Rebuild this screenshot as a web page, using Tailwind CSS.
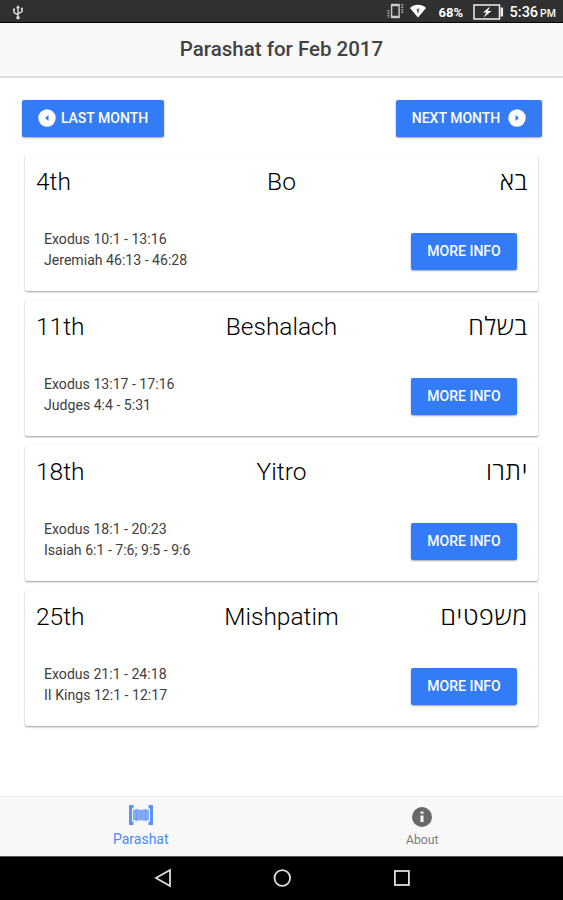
<!DOCTYPE html>
<html lang="en">
<head>
    <meta charset="UTF-8">
    <meta name="viewport" content="width=device-width, initial-scale=1.0">
    <title>Parashat for Feb 2017</title>
    <script src="https://cdn.jsdelivr.net/npm/@tailwindcss/browser@4"></script>
</head>
<body class="bg-white">
    <div class="flex h-[900px] w-[563px] flex-col overflow-hidden bg-white font-['Roboto','Open_Sans',sans-serif] text-black">
        <!-- Status bar -->
        <div class="flex h-[23px] shrink-0 items-center border-b border-black bg-[#303030] pl-3 pr-[7px] text-white">
            <svg class="mt-0.5 h-[15px] w-3" viewBox="0 0 12 16" fill="none" stroke="#ddd" stroke-width="1.500">
                <path d="M6 2v11M6 10.500L1.800 8V5M6 9.500L10.200 7V4"/>
                <path d="M6 0L3.800 3.500h4.400zM.8 3.800h2v2h-2zM9.200 3h2v2h-2z" fill="#ddd" stroke="none"/>
                <circle cx="6" cy="13.500" r="1.900" fill="#ddd" stroke="none"/>
            </svg>
            <svg class="ml-auto h-4 w-[17px]" viewBox="0 0 17 16" fill="none" stroke="#ccc">
                <rect x="4.600" y="1.500" width="7.500" height="13" stroke-width="1.400"/>
                <path d="M5 2.500h7M5 13.500h7" stroke-width="1.500"/>
                <path d="M1.500 7v8M15.200 1v9" stroke-dasharray="1.500 1" stroke-width="2.200" stroke="#999"/>
            </svg>
            <svg class="ml-[6px] h-[14px] w-4" viewBox="0 0 16 13">
                <path d="M0 3.500C4.500-.8 11.500-.8 16 3.500L8 13z" fill="#fff"/>
                <path d="M8 4v4.500M6.700 5.500h2.600" stroke="#555" stroke-width="1.300"/>
            </svg>
            <span class="ml-[13px] mt-[3px] w-[26px] whitespace-nowrap text-[13px] font-bold leading-none">68%</span>
            <svg class="ml-[8px] mt-px h-4 w-[31px]" viewBox="0 0 31 16" fill="none" stroke="#eee">
                <rect x="1" y="1" width="25.500" height="14" stroke-width="1.500"/>
                <path d="M28.800 3.500v9" stroke-width="2.500"/>
                <path d="M17 2.500L10 8.500h3.500L10.500 13.500L18.500 7H15z" fill="#fff" stroke="none"/>
            </svg>
            <span class="ml-[6px] mt-[5px] whitespace-nowrap text-[14.500px] font-medium leading-none">5:36<span class="ml-0.5 text-[10.500px]">PM</span></span>
        </div>

        <!-- Header -->
        <header class="flex h-[55px] shrink-0 items-center justify-center border-b-2 border-[#dedede] bg-[#f8f8f8] pb-0.5">
            <h1 class="text-[20.500px] font-medium leading-6 text-[#424242]">Parashat for Feb 2017</h1>
        </header>

        <!-- Content -->
        <main class="flex-1">
            <div class="flex justify-between px-[22px] pt-[22px]">
                <button class="flex h-[37px] w-[142px] items-center justify-center gap-[5px] rounded-[2px] bg-[#347cf7] text-[14px] font-medium text-white shadow-[0_1px_2px_rgba(0,0,0,0.35)]">
                    <svg class="-mt-px h-[18px] w-[18px]" viewBox="0 0 18 18"><circle cx="9" cy="9" r="8.700" fill="#fff"/><path d="M10.500 6v6L7 9z" fill="#347cf7"/></svg>
                    <span>LAST MONTH</span>
                </button>
                <button class="-mr-px flex h-[37px] w-[146px] items-center justify-center gap-2 rounded-[2px] bg-[#347cf7] text-[14px] font-medium text-white shadow-[0_1px_2px_rgba(0,0,0,0.35)]">
                    <span>NEXT MONTH</span>
                    <svg class="-mt-px h-[18px] w-[18px]" viewBox="0 0 18 18"><circle cx="9" cy="9" r="8.700" fill="#fff"/><path d="M7.500 6v6L11 9z" fill="#347cf7"/></svg>
                </button>
            </div>

            <div class="mt-[18px] flex flex-col gap-[9.500px] px-[25px]">
                <section class="h-[135.500px] rounded-[2px] px-[11px] pt-[11px] shadow-[0_1px_2px_rgba(0,0,0,0.4)]">
                    <div class="grid grid-cols-3 text-[24.500px] font-light leading-8">
                        <h2>4th</h2>
                        <h2 class="text-center">Bo</h2>
                        <h2 class="-mr-px text-right text-[25px] tracking-[0.7px]" lang="he">בא</h2>
                    </div>
                    <div class="mt-[31px] flex justify-between pl-2 pr-[10px]">
                        <p class="text-[14.100px] leading-[21px] text-[#404040]">Exodus 10:1 - 13:16<br>Jeremiah 46:13 - 46:28</p>
                        <button class="mt-[4px] h-[37px] w-[106px] rounded-[2px] bg-[#347cf7] text-[14px] font-medium text-white shadow-[0_1px_2px_rgba(0,0,0,0.35)]">MORE INFO</button>
                    </div>
                </section>

                <section class="h-[135.500px] rounded-[2px] px-[11px] pt-[11px] shadow-[0_1px_2px_rgba(0,0,0,0.4)]">
                    <div class="grid grid-cols-3 text-[24.500px] font-light leading-8">
                        <h2>11th</h2>
                        <h2 class="text-center">Beshalach</h2>
                        <h2 class="-mr-px text-right text-[25px] tracking-[0.7px]" lang="he">בשלח</h2>
                    </div>
                    <div class="mt-[31px] flex justify-between pl-2 pr-[10px]">
                        <p class="text-[14.100px] leading-[21px] text-[#404040]">Exodus 13:17 - 17:16<br>Judges 4:4 - 5:31</p>
                        <button class="mt-[4px] h-[37px] w-[106px] rounded-[2px] bg-[#347cf7] text-[14px] font-medium text-white shadow-[0_1px_2px_rgba(0,0,0,0.35)]">MORE INFO</button>
                    </div>
                </section>

                <section class="h-[135.500px] rounded-[2px] px-[11px] pt-[11px] shadow-[0_1px_2px_rgba(0,0,0,0.4)]">
                    <div class="grid grid-cols-3 text-[24.500px] font-light leading-8">
                        <h2>18th</h2>
                        <h2 class="text-center">Yitro</h2>
                        <h2 class="-mr-px text-right text-[25px] tracking-[0.7px]" lang="he">יתרו</h2>
                    </div>
                    <div class="mt-[31px] flex justify-between pl-2 pr-[10px]">
                        <p class="text-[14.100px] leading-[21px] text-[#404040]">Exodus 18:1 - 20:23<br>Isaiah 6:1 - 7:6; 9:5 - 9:6</p>
                        <button class="mt-[4px] h-[37px] w-[106px] rounded-[2px] bg-[#347cf7] text-[14px] font-medium text-white shadow-[0_1px_2px_rgba(0,0,0,0.35)]">MORE INFO</button>
                    </div>
                </section>

                <section class="h-[135.500px] rounded-[2px] px-[11px] pt-[11px] shadow-[0_1px_2px_rgba(0,0,0,0.4)]">
                    <div class="grid grid-cols-3 text-[24.500px] font-light leading-8">
                        <h2>25th</h2>
                        <h2 class="text-center">Mishpatim</h2>
                        <h2 class="-mr-px text-right text-[25px] tracking-[0.7px]" lang="he">משפטים</h2>
                    </div>
                    <div class="mt-[31px] flex justify-between pl-2 pr-[10px]">
                        <p class="text-[14.100px] leading-[21px] text-[#404040]">Exodus 21:1 - 24:18<br>II Kings 12:1 - 12:17</p>
                        <button class="mt-[4px] h-[37px] w-[106px] rounded-[2px] bg-[#347cf7] text-[14px] font-medium text-white shadow-[0_1px_2px_rgba(0,0,0,0.35)]">MORE INFO</button>
                    </div>
                </section>
            </div>
        </main>

        <!-- Tabs -->
        <nav class="grid h-[60px] shrink-0 grid-cols-2 border-t border-[#ebebeb] bg-[#f8f8f8]">
            <a href="#" class="flex flex-col items-center pt-2 text-[#488aff]">
                <svg class="h-5 w-6" viewBox="0 0 24 20">
                    <path d="M4 5l3.500-1L12 5l4.500-1L20 5v10l-3.500 1l-4.500-1l-4.500 1L4 15z" fill="#83abf7"/>
                    <path d="M7.500 5v10M12 5v10M16.500 5v10" stroke="#6d9cf6"/>
                    <path d="M0 0h4.500v3.500H3v13h1.500V20H0zM24 0h-4.500v3.500H21v13h-1.500V20H24z" fill="#5a94fb"/>
                </svg>
                <span class="mt-[6px] text-[14px] leading-4">Parashat</span>
            </a>
            <a href="#" class="flex flex-col items-center pt-2.5 text-[#7c7c7c]">
                <svg class="h-5 w-5" viewBox="0 0 20 20">
                    <circle cx="10" cy="10" r="10" fill="#686868"/>
                    <path d="M8.500 4.500h3v2.300h-3zM8.500 8.500h3v6.500h-3z" fill="#f8f8f8"/>
                </svg>
                <span class="mt-[5px] text-[12.200px] leading-4">About</span>
            </a>
        </nav>

        <!-- Android navigation -->
        <div class="flex h-11 shrink-0 items-center justify-between border-t border-[#555] bg-black pb-0.5 pl-[153px] pr-[151px]">
            <svg class="h-5 w-5" viewBox="0 0 20 20" fill="none" stroke="#ddd" stroke-width="1.800"><path d="M17 2v16L3 10z"/></svg>
            <svg class="h-5 w-5" viewBox="0 0 20 20" fill="none" stroke="#ddd" stroke-width="1.800"><circle cx="9.300" cy="10" r="7.800"/></svg>
            <svg class="h-5 w-5" viewBox="0 0 20 20" fill="none" stroke="#ddd" stroke-width="1.800"><rect x="2.900" y="3" width="14" height="14"/></svg>
        </div>
    </div>
</body>
</html>
